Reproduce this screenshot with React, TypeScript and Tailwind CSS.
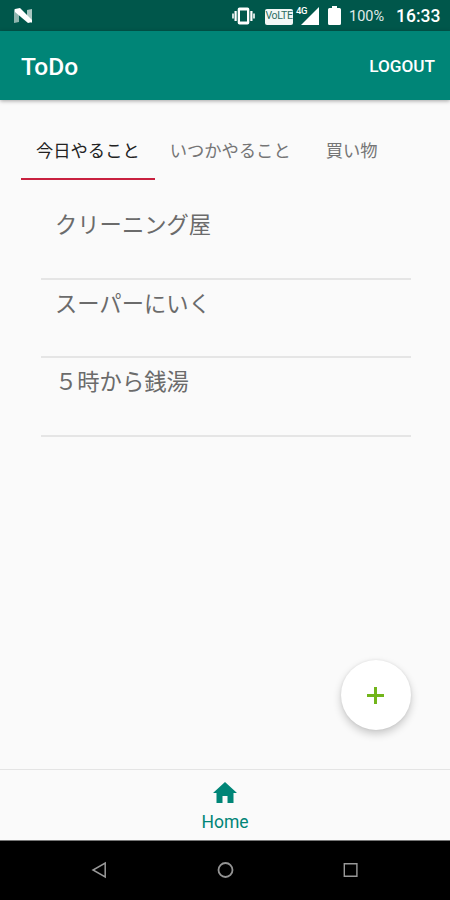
import { useState } from "react";

const tabs = ["今日やること", "いつかやること", "買い物"];

const todos = [
  ["クリーニング屋", "スーパーにいく", "５時から銭湯"],
  [],
  [],
];

const StatusBar = () => (
  <div className="flex h-[31px] shrink-0 items-center bg-[#00574b] pl-[14px] pr-[10px] text-white">
    <svg width="19" height="16" viewBox="0 0 19 16">
      <path d="M0 1l5 3v10l-5 1z" fill="#8fb5ae" />
      <path d="M13 2l5-1v14l-5-3z" fill="#a9c6c1" />
      <path d="M1 1l5-1 12 12v2l-4 1L1 4z" fill="#fff" />
    </svg>
    <div className="ml-auto flex items-center">
      <svg width="24" height="18" viewBox="0 0 24 18" fill="#fff">
        <path
          fillRule="evenodd"
          d="M7.500 0.500h8a1.800 1.800 0 0 1 1.800 1.800v13.400a1.800 1.800 0 0 1-1.800 1.800h-8a1.800 1.800 0 0 1-1.800-1.800V2.300a1.800 1.800 0 0 1 1.800-1.800zM8 3.500v11h7v-11z"
        />
        <path d="M2.500 4h2.200v10H2.500zM0.200 6.500h1.600v5H0.200zM18.300 4h2.200v10h-2.200zM21.200 6.500h1.600v5h-1.600z" />
      </svg>
      <span className="ml-[9px] mt-[2px] flex h-[16px] w-[28px] items-center justify-center rounded-[2px] bg-[#f2f7f6] font-['Roboto'] text-[10.500px] leading-none tracking-[-0.4px] text-[#2c6c62]">
        VoLTE
      </span>
      <span className="ml-[3px] -mr-[7px] mt-px w-[12px] self-start font-['Roboto'] text-[9.5px] font-medium leading-[10px] tracking-[-0.3px]">
        4G
      </span>
      <svg width="18" height="18" viewBox="0 0 18 18">
        <path d="M18 0v18H0z" fill="#fff" />
      </svg>
      <svg width="13" height="19" viewBox="0 0 13 19" className="ml-[9px]">
        <path d="M4 0h5v2h2.500A1.500 1.500 0 0 1 13 3.500v14a1.500 1.500 0 0 1-1.500 1.500h-10A1.500 1.500 0 0 1 0 17.500v-14A1.500 1.500 0 0 1 1.500 2H4z" fill="#fff" />
      </svg>
      <span className="ml-[8px] mt-[3px] w-[36px] whitespace-nowrap font-['Roboto'] text-[14.500px] leading-none text-[#e0ebe9]">
        100%
      </span>
      <span className="ml-[11px] mt-[3px] w-[44px] whitespace-nowrap font-['Roboto'] text-[17.500px] font-medium leading-none">
        16:33
      </span>
    </div>
  </div>
);

const NavigationBar = () => (
  <div className="flex h-[60px] items-center justify-center gap-[109px] border-t border-[#777] bg-black pb-px pr-px">
    <svg width="16" height="18" viewBox="0 0 16 18" fill="none" stroke="#999" strokeWidth="1.5">
      <path d="M14.200 2v14L2 9z" />
    </svg>
    <svg width="18" height="18" viewBox="0 0 18 18" fill="none" stroke="#949494" strokeWidth="1.8">
      <circle cx="9.500" cy="9" r="7" />
    </svg>
    <svg width="16" height="16" viewBox="0 0 16 16" fill="none" stroke="#999" strokeWidth="1.4">
      <path d="M1.300 1.700h12.600v12.600H1.300z" />
    </svg>
  </div>
);

const App = () => {
  const [activeTab, setActiveTab] = useState(0);

  return (
    <div className="relative flex h-[900px] w-[450px] flex-col overflow-hidden bg-[#fafafa] font-['Roboto','Noto_Sans_CJK_JP',sans-serif]">
      <StatusBar />
      <header className="flex h-[69px] shrink-0 items-center justify-between bg-[#008577] pl-[21px] pr-[15px] text-white shadow-[0_1px_4px_rgba(0,0,0,0.35)]">
        <h1 className="pt-[3px] text-[24.500px] font-medium">ToDo</h1>
        <button className="pt-[2px] text-[17.2px] font-medium">LOGOUT</button>
      </header>

      <nav className="flex h-[80px] shrink-0 items-end pl-[21px]">
        {tabs.map((tab, index) => (
          <button
            key={tab}
            onClick={() => setActiveTab(index)}
            className={`flex h-[60px] min-w-[92px] items-center justify-center border-b-2 px-[15px] pt-[5px] text-[17.3px] ${
              activeTab === index
                ? "border-[#c8203f] text-[#222]"
                : "border-transparent text-[#757575]"
            }`}
          >
            {tab}
          </button>
        ))}
      </nav>

      <main className="flex-1 pl-[41px] pr-[39px] pt-[21px]">
        <ul>
          {todos[activeTab].map((todo) => (
            <li
              key={todo}
              className="h-[78.500px] border-b-2 border-[#e5e5e5] pl-[14px] pt-[8px] text-[22.3px] leading-[33px] text-[#6b6b6b]"
            >
              {todo}
            </li>
          ))}
        </ul>
      </main>

      <button
        aria-label="Add"
        className="absolute left-[340.500px] top-[660px] flex h-[70px] w-[70px] items-center justify-center rounded-full bg-white shadow-[0_4px_8px_rgba(0,0,0,0.2),0_0_3px_rgba(0,0,0,0.08)]"
      >
        <svg width="17" height="17" viewBox="0 0 17 17">
          <path d="M7 0h3v7h7v3h-7v7H7v-7H0V7h7z" fill="#72b51b" />
        </svg>
      </button>

      <footer className="flex h-[71px] shrink-0 flex-col items-center border-t border-[#e4e4e4] pt-[12px] text-[#008577]">
        <svg width="24" height="21" viewBox="0 0 24 21">
          <path d="M12 0L24 11h-3.500v10h-6v-7h-5v7h-6V11H0z" fill="currentColor" />
        </svg>
        <span className="mt-[7px] text-[17.500px] leading-[24px]">Home</span>
      </footer>
      <NavigationBar />
    </div>
  );
};

export default App;
